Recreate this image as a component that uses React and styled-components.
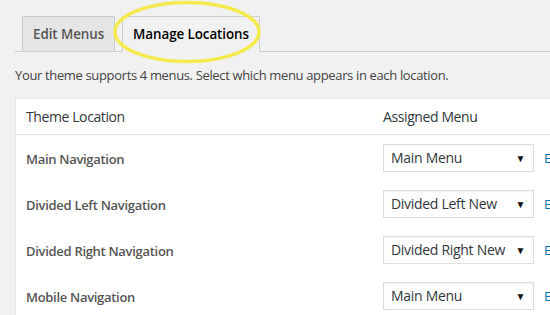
import React from "react";
import styled, { createGlobalStyle } from "styled-components";

const Global = createGlobalStyle`
  html, body { margin: 0; padding: 0; background: #f1f1f1; }
  body { font-family: "Open Sans", "Noto Sans", sans-serif; color: #32373c; overflow: hidden; }
`;

const Wrap = styled.div`
  width: 550px;
  height: 315px;
  overflow: hidden;
  padding: 16px 0 0 15px;
  box-sizing: border-box;
`;

const TabBar = styled.div`
  display: flex;
  border-bottom: 1px solid #ccc;
  margin-right: -20px;
`;

const TabWrap = styled.div`
  position: relative;
  margin-left: 7px;
  margin-bottom: -1px;
`;

const Tab = styled.div`
  font-size: 13.4px;
  font-weight: 600;
  letter-spacing: -0.08px;
  line-height: 24px;
  padding: 5px 10px;
  border: 1px solid #ccc;
  border-bottom-color: ${(p) => (p.$active ? "#f1f1f1" : "#ccc")};
  background: ${(p) => (p.$active ? "#f1f1f1" : "#e5e5e5")};
  color: ${(p) => (p.$active ? "#000" : "#555")};
  white-space: nowrap;
`;

const Highlight = styled.svg`
  position: absolute;
  left: -9px;
  top: -16px;
  pointer-events: none;
  overflow: visible;
`;

const Desc = styled.p`
  font-size: 13px;
  letter-spacing: -0.35px;
  line-height: 1.5;
  margin: 14px 0 12px;
  color: #444;
  white-space: nowrap;
`;

const Table = styled.div`
  background: #fff;
  border: 1px solid #e5e5e5;
  border-right: none;
  width: 600px;
`;

const HeadRow = styled.div`
  display: grid;
  grid-template-columns: 357px 1fr;
  border-bottom: 1px solid #e1e1e1;
  height: 35px;
  align-items: center;
`;

const HeadCell = styled.div`
  font-size: 14px;
  letter-spacing: -0.4px;
  padding: 0 10px;
  color: #32373c;
`;

const Row = styled.div`
  display: grid;
  grid-template-columns: 357px 1fr;
  height: 46px;
  align-items: center;
`;

const LocName = styled.div`
  font-size: 13px;
  font-weight: 600;
  letter-spacing: -0.3px;
  padding: 3px 10px 0;
  color: #555;
`;

const MenuCell = styled.div`
  display: flex;
  align-items: center;
  padding: 0 10px;
`;

const Select = styled.div`
  width: 151px;
  height: 28px;
  box-sizing: border-box;
  border: 1px solid #ddd;
  background: #fff;
  box-shadow: inset 0 1px 2px rgba(0,0,0,0.04);
  display: flex;
  align-items: center;
  justify-content: space-between;
  padding: 0 8px 0 7px;
  font-size: 14px;
  letter-spacing: -0.3px;
  color: #32373c;
`;

const Arrow = styled.span`
  font-size: 10px;
  color: #111;
`;

const EditLink = styled.a`
  margin-left: 10px;
  font-size: 13px;
  color: #0073aa;
  text-decoration: none;
`;

const rows = [
  ["Main Navigation", "Main Menu"],
  ["Divided Left Navigation", "Divided Left New"],
  ["Divided Right Navigation", "Divided Right New"],
  ["Mobile Navigation", "Main Menu"],
];

export default function App() {
  return (
    <Wrap>
      <Global />
      <TabBar>
        <TabWrap>
          <Tab>Edit Menus</Tab>
        </TabWrap>
        <TabWrap>
          <Tab $active>Manage Locations</Tab>
          <Highlight width="150" height="64" viewBox="0 0 150 64">
            <ellipse cx="74" cy="32" rx="72" ry="29.5" fill="none" stroke="#f4e94e" strokeWidth="3.5" />
          </Highlight>
        </TabWrap>
      </TabBar>
      <Desc>Your theme supports 4 menus. Select which menu appears in each location.</Desc>
      <Table>
        <HeadRow>
          <HeadCell>Theme Location</HeadCell>
          <HeadCell>Assigned Menu</HeadCell>
        </HeadRow>
        {rows.map(([loc, menu]) => (
          <Row key={loc}>
            <LocName>{loc}</LocName>
            <MenuCell>
              <Select>
                <span>{menu}</span>
                <Arrow>▼</Arrow>
              </Select>
              <EditLink href="#">Edit</EditLink>
            </MenuCell>
          </Row>
        ))}
      </Table>
    </Wrap>
  );
}
